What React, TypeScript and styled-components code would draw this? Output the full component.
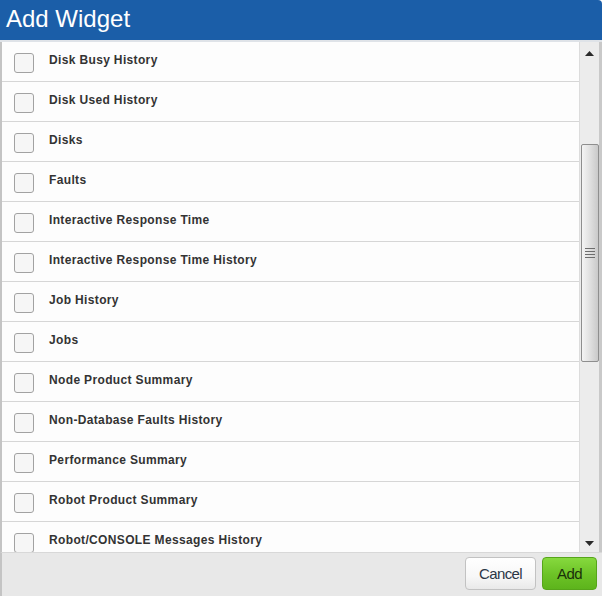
import React from "react";
import styled, { createGlobalStyle } from "styled-components";

const Global = createGlobalStyle`
  html, body { margin: 0; padding: 0; background: #ffffff; }
  * { box-sizing: border-box; }
`;

const Dialog = styled.div`
  width: 602px;
  height: 596px;
  display: flex;
  flex-direction: column;
  font-family: "Liberation Sans", Arial, sans-serif;
  overflow: hidden;
`;

const Header = styled.div`
  height: 42px;
  flex: none;
  background: #1b5ea8;
  border-bottom: 2px solid #dfe3e8;
  border-top-right-radius: 4px;
  color: #ffffff;
  font-size: 24px;
  line-height: 38px;
  padding-left: 6px;
`;

const Body = styled.div`
  flex: 1;
  min-height: 0;
  display: flex;
  border-left: 2px solid #c4c4c4;
  border-right: 3px solid #c9c9c9;
`;

const List = styled.div`
  flex: 1;
  min-width: 0;
  overflow: hidden;
  background: #fdfdfd;
  border-right: 1px solid #dcdcdc;
`;

const Row = styled.div`
  height: 40px;
  display: flex;
  align-items: center;
  border-bottom: 1px solid #d6d6d6;
  padding-left: 12px;
`;

const Check = styled.span`
  width: 20px;
  height: 20px;
  flex: none;
  border: 1px solid #a2a2a2;
  border-radius: 3px;
  background: #f6f6f6;
  margin-top: 2px;
`;

const Label = styled.span`
  margin-left: 15px;
  font-size: 12px;
  font-weight: bold;
  letter-spacing: 0.35px;
  color: #333333;
  margin-top: -3px;
`;

const Scrollbar = styled.div`
  width: 19px;
  flex: none;
  background: #ececec;
  display: flex;
  flex-direction: column;
  align-items: center;
`;

const ArrowBox = styled.div<{ $offset?: number }>`
  height: 18px;
  width: 100%;
  display: flex;
  align-items: center;
  justify-content: center;
  flex: none;
  margin-top: ${(p) => p.$offset ?? 0}px;
`;

const Thumb = styled.div<{ $top: number; $height: number }>`
  margin-top: ${(p) => p.$top}px;
  height: ${(p) => p.$height}px;
  width: 18px;
  border: 1px solid #8e8e8e;
  border-radius: 2px;
  background: linear-gradient(to right, #f4f4f4 0%, #e4e4e4 40%, #c9c9c9 100%);
  display: flex;
  align-items: center;
  justify-content: center;
`;

const Grip = styled.div`
  width: 10px;
  display: flex;
  flex-direction: column;
  gap: 2px;
  & > span {
    height: 1px;
    background: #6d6d6d;
  }
`;

const Spacer = styled.div`
  flex: 1;
`;

const Footer = styled.div`
  height: 44px;
  flex: none;
  background: #e8e8e8;
  border-left: 2px solid #c4c4c4;
  display: flex;
  justify-content: flex-end;
  align-items: flex-start;
  gap: 6px;
  padding: 4px 5px 0 0;
  border-top: 1px solid #d8d8d8;
`;

const Button = styled.button<{ $primary?: boolean }>`
  height: 33px;
  padding: 0 12px;
  font-family: "Liberation Sans", Arial, sans-serif;
  font-size: 15px;
  letter-spacing: -0.6px;
  border-radius: 4px;
  border: 1px solid ${(p) => (p.$primary ? "#56a51a" : "#c2c2c2")};
  background: ${(p) =>
    p.$primary
      ? "linear-gradient(to bottom, #86d93e 0%, #6cc226 55%, #5db41c 100%)"
      : "linear-gradient(to bottom, #ffffff 0%, #f7f7f7 60%, #e9e9e9 100%)"};
  color: ${(p) => (p.$primary ? "#1a300a" : "#2b3646")};
  min-width: ${(p) => (p.$primary ? "55px" : "71px")};
`;

const items = [
  "Disk Busy History",
  "Disk Used History",
  "Disks",
  "Faults",
  "Interactive Response Time",
  "Interactive Response Time History",
  "Job History",
  "Jobs",
  "Node Product Summary",
  "Non-Database Faults History",
  "Performance Summary",
  "Robot Product Summary",
  "Robot/CONSOLE Messages History",
];

const UpArrow = () => (
  <svg width="9" height="5" viewBox="0 0 9 5">
    <polygon points="0,5 9,5 4.5,0" fill="#2a2a2a" />
  </svg>
);

const DownArrow = () => (
  <svg width="9" height="5" viewBox="0 0 9 5">
    <polygon points="0,0 9,0 4.5,5" fill="#2a2a2a" />
  </svg>
);

export default function App() {
  return (
    <>
      <Global />
      <Dialog>
        <Header>Add Widget</Header>
        <Body>
          <List>
            {items.map((t) => (
              <Row key={t}>
                <Check />
                <Label>{t}</Label>
              </Row>
            ))}
          </List>
          <Scrollbar>
            <ArrowBox $offset={2}>
              <UpArrow />
            </ArrowBox>
            <Thumb $top={82} $height={218}>
              <Grip>
                <span />
                <span />
                <span />
                <span />
              </Grip>
            </Thumb>
            <Spacer />
            <ArrowBox>
              <DownArrow />
            </ArrowBox>
          </Scrollbar>
        </Body>
        <Footer>
          <Button>Cancel</Button>
          <Button $primary>Add</Button>
        </Footer>
      </Dialog>
    </>
  );
}
